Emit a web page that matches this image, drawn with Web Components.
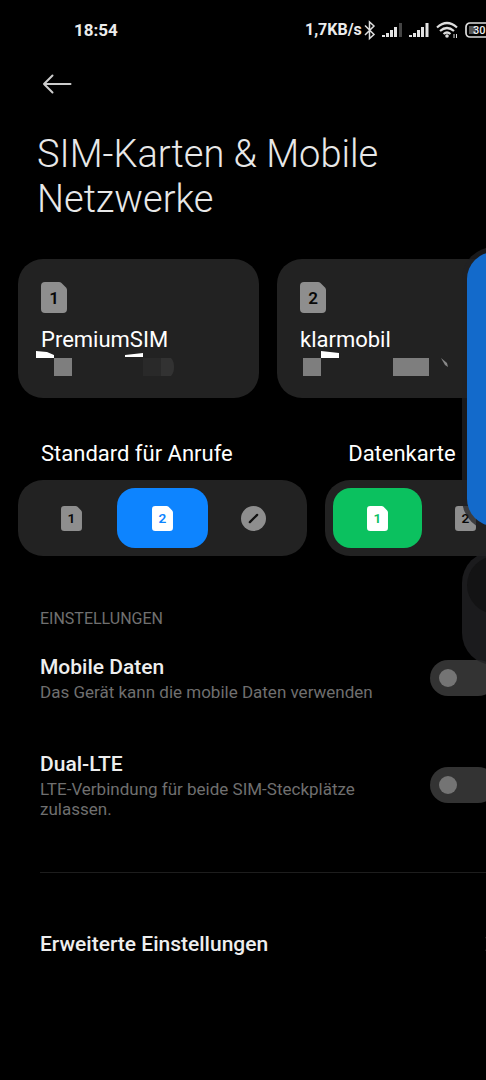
<!DOCTYPE html>
<html lang="de">
<head>
<meta charset="utf-8">
<meta name="viewport" content="width=device-width, initial-scale=1">
<title>SIM-Karten &amp; Mobile Netzwerke</title>
<style>
  html, body { margin: 0; background: #000; }
  body { min-height: 100vh; font-family: Roboto, "Noto Sans", sans-serif; color: #eaeaea; }
</style>
</head>
<body>
<sim-settings></sim-settings>
<script>
const define = (name, html, setup) => customElements.define(name, class extends HTMLElement {
  connectedCallback() {
    if (this.shadowRoot) return;
    const root = this.attachShadow({ mode: 'open' });
    root.innerHTML = typeof html === 'function' ? html(this) : html;
    if (setup) setup(root, this);
  }
});

define('status-bar', `
<style>
  :host { display: flex; align-items: center; justify-content: space-between; height: 60px; padding-left: 74px; font-size: 17px; line-height: 20px; font-weight: 700; color: #ececec; }
  .right { display: flex; align-items: center; width: 231px; }
  .rate { font-size: 16px; }
  svg { display: block; flex: none; }
</style>
<span>18:54</span>
<div class="right">
  <span class="rate">1,7KB/s</span>
  <svg width="172" height="24" viewBox="0 0 172 24" fill="none" stroke="#ddd" stroke-width="1.5">
    <path d="M3 7.500l9 9-4.500 4V4l4.500 4-9 9"/>
    <g fill="#e4e4e4" stroke="none">
      <path d="M20 17h3v2h-3zM24 15h3v4h-3zM28 12h3v7h-3zM32 9h3v10h-3z"/>
      <path d="M37 5h3v14h-3z" fill="#444"/>
      <path d="M47 17h3v2h-3zM51 15h3v4h-3zM55 12h3v7h-3zM59 9h3v10h-3zM63.500 5h3v14h-3z"/>
    </g>
    <path d="M75 9.500q10-9 20 0M78 13q7-6 14 0M81.500 16q3.500-3 7 0" stroke-width="2.200"/>
    <circle cx="85" cy="18" r="1.800" fill="#ddd" stroke="none"/>
    <path d="M92 20v-4M94.500 16v4" stroke-width="1"/>
    <rect x="104" y="5" width="30" height="14" rx="4" stroke-width="1.700"/>
    <rect x="107" y="8" width="7" height="8" fill="#555" stroke="none"/>
    <text x="111" y="16" font-family="Roboto" font-size="11" font-weight="500" fill="#eee" stroke="none">30</text>
  </svg>
</div>`);

define('sim-icon', el => {
  const n = el.getAttribute('number');
  return `
<style>
  :host { display: block; width: var(--w, 26px); height: var(--h, 31px); color: var(--icon, #8e8e8e); }
  svg { display: block; width: 100%; height: 100%; }
  text { font-family: "Roboto", sans-serif; font-weight: 600; font-size: 17px; fill: var(--digit, #080808); }
</style>
<svg viewBox="0 0 26 31" aria-hidden="true">
  <path fill="currentColor" d="M4 0h14q1.500 0 2.500 1l4.500 4.500q1 1 1 2.500V27a4 4 0 0 1-4 4H4a4 4 0 0 1-4-4V4a4 4 0 0 1 4-4z"/>
  <text x="13" y="21.500" text-anchor="middle">${n}</text>
</svg>`;
});

define('sim-card', `
<style>
  :host { display: block; box-sizing: border-box; height: 139px; padding: 23px; border-radius: 25px; background: #222; }
  h2 { margin: 14px 0 0; font-size: 22px; line-height: 26px; font-weight: 400; color: #fff; }
</style>
<slot name="icon"></slot>
<h2><slot></slot></h2>
<slot name="remains"></slot>`);

define('sim-choice', el => {
  const legend = el.getAttribute('label'), on = el.getAttribute('selected');
  const items = el.getAttribute('options').split(',');
  const none = '<svg class="none" viewBox="0 0 24 24" aria-hidden="true"><circle cx="12" cy="12" r="12" fill="#8e8e8e"/><path d="M8.500 15.500l7-7" stroke="#111" stroke-width="2.200" stroke-linecap="round"/></svg>';
  return `
<style>
  :host { display: block; }
  fieldset { border: 0; margin: 0; padding: 0; min-width: 0; }
  legend { padding: 0 0 0 23px; font-size: 22px; line-height: 26px; color: #fff; }
  .track { display: flex; margin-top: 13px; padding: 8px; border-radius: 25px; background: #222; }
  label { flex: 1; display: grid; place-items: center; height: 60px; border-radius: 18px; cursor: pointer; }
  input { appearance: none; position: absolute; margin: 0; width: 1px; height: 1px; opacity: 0; }
  sim-icon { --w: 21px; --h: 25px; }
  label:has(:checked) { background: var(--accent); --icon: #fff; --digit: var(--accent); }
  .none { width: 25px; height: 25px; }
</style>
<fieldset>
  <legend>${legend}</legend>
  <div class="track">${items.map(i => `<label><input type="radio" name="sim" aria-label="${i === 'none' ? 'Keine' : 'SIM ' + i}" ${i === on ? 'checked' : ''}>${i === 'none' ? none : `<sim-icon number="${i}"></sim-icon>`}</label>`).join('')}</div>
</fieldset>`;
});

define('setting-row', `
<style>
  :host { display: block; }
  label { display: flex; align-items: center; justify-content: space-between; gap: 20px; }
  .text { width: 340px; }
  b { display: block; font-size: 21px; line-height: 26px; font-weight: 500; color: #eee; }
  small { display: block; font-size: 17px; line-height: 20px; margin-top: 2px; color: #6f6f6f; }
  input { appearance: none; display: grid; align-items: center; flex: none; box-sizing: border-box; width: 66px; height: 36px; margin: 0; padding: 0 9px; border-radius: 18px; background: #333; }
  input::before { content: ""; width: 18px; height: 18px; border-radius: 50%; background: #747474; }
  input:checked::before { justify-self: end; }
</style>
<label><span class="text"><b><slot></slot></b><small><slot name="note"></slot></small></span><input type="checkbox" role="switch"></label>`);

define('volume-panel', `
<style>
  :host { display: grid; gap: 20px; width: 74px; }
  .slider { height: 284px; padding: 5px; border-radius: 32px; background: rgba(34, 34, 36, .75); box-sizing: border-box; }
  .level { height: 100%; border-radius: 27px; background: #136acb; }
  .mode { height: 114px; padding: 5px; border-radius: 32px; background: rgba(34, 34, 36, .8); box-sizing: border-box; }
  .knob { width: 58px; height: 58px; border-radius: 50%; background: #131314; }
</style>
<div class="slider"><div class="level"></div></div>
<div class="mode"><div class="knob"></div></div>`);

define('sim-settings', `
<style>
  :host { display: block; min-height: 100vh; overflow: hidden; }
  .screen { position: relative; width: calc(100% + 50px); }
  header { padding: 0 37px; }
  .back { display: block; margin: 0; padding: 0; border: 0; background: none; width: 42px; height: 48px; color: #ccc; }
  .back svg { display: block; margin-left: 5px; }
  h1 { margin: 24px 0 0; width: 380px; font-size: 38px; line-height: 45px; font-weight: 300; color: #e8e8e8; }
  main { padding: 0 18px; }
  .cards { display: grid; grid-template-columns: 1fr 1fr; gap: 18px; margin-top: 37px; }
  .remains { display: block; width: 160px; height: 28px; margin: -3px 0 0 -6px; }
  .choices { display: grid; grid-template-columns: 3fr 2fr; gap: 18px; margin-top: 43px; }
  .list { padding: 0 22px; }
  h3 { margin: 53px 0 0; font-size: 16px; line-height: 20px; font-weight: 400; color: #707070; }
  .data { margin-top: 25px; }
  .lte { margin-top: 49px; }
  hr { border: 0; height: 1px; margin: 53px 0 0; background: #1d1d1d; }
  .more { display: flex; align-items: center; justify-content: space-between; margin-top: 58px; font-size: 21px; line-height: 26px; font-weight: 500; color: #eee; text-decoration: none; }
  volume-panel { position: absolute; top: 247px; left: calc(100% - 74px); }
</style>
<div class="screen">
<status-bar></status-bar>
<header>
  <button class="back" aria-label="Zurück"><svg width="30" height="22" viewBox="0 0 30 22" fill="none" stroke="currentColor" stroke-width="2" stroke-linecap="round" stroke-linejoin="round"><path d="M28.500 11H2M10.500 2.500L2 11l8.500 8.500"/></svg></button>
  <h1>SIM-Karten &amp; Mobile Netzwerke</h1>
</header>
<main>
  <div class="cards">
    <sim-card><sim-icon slot="icon" number="1"></sim-icon>PremiumSIM
      <svg slot="remains" class="remains" viewBox="0 0 160 28"><path fill="#fff" d="M1 1l11 1 7 3v3H1zM90 5l18-2v4H90z"/><path fill="#7e7e7e" d="M19 8h18v18H19z"/><path fill="#292929" d="M108 8h18v18h-18z"/><path fill="#323232" d="M126 8h10q3 3 3 9t-3 9h-10z"/></svg>
    </sim-card>
    <sim-card><sim-icon slot="icon" number="2"></sim-icon>klarmobil
      <svg slot="remains" class="remains" viewBox="0 0 160 28"><path fill="#fff" d="M27 1l18 2v5H27z"/><path fill="#7e7e7e" d="M9 8h18v18H9zM99 8h36v18H99z"/><path fill="#888" d="M147 8l6 5 1 4-3-2z"/></svg>
    </sim-card>
  </div>
  <div class="choices">
    <sim-choice label="Standard für Anrufe" options="1,2,none" selected="2" style="--accent:#0d84ff"></sim-choice>
    <sim-choice label="Datenkarte" options="1,2" selected="1" style="--accent:#0bc15f"></sim-choice>
  </div>
  <div class="list">
    <h3>EINSTELLUNGEN</h3>
    <setting-row class="data">Mobile Daten<span slot="note">Das Gerät kann die mobile Daten verwenden</span></setting-row>
    <setting-row class="lte">Dual-LTE<span slot="note">LTE-Verbindung für beide SIM-Steckplätze zulassen.</span></setting-row>
    <hr>
    <a class="more" href="#erweitert">Erweiterte Einstellungen<svg width="12" height="18" viewBox="0 0 12 18" fill="none" stroke="#444" stroke-width="2" aria-hidden="true"><path d="M2 2l7 7-7 7"/></svg></a>
  </div>
</main>
<volume-panel></volume-panel>
</div>`);
</script>
</body>
</html>
